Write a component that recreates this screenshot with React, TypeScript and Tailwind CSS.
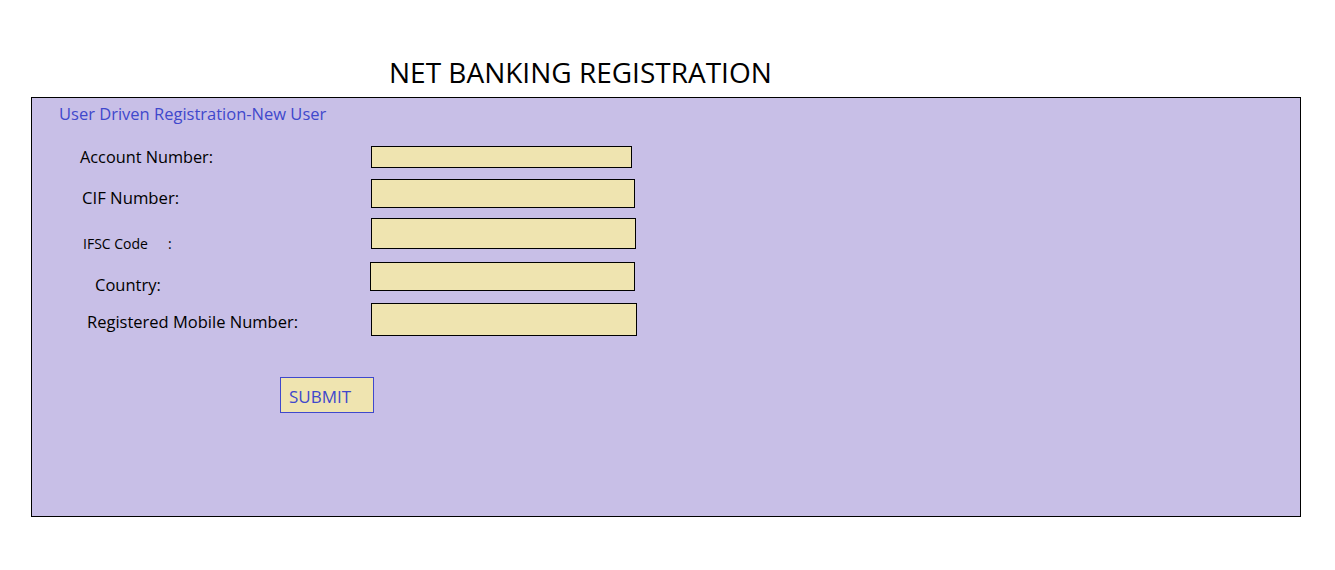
export default function App() {
  const font = { fontFamily: '"Open Sans", "Noto Sans", sans-serif' };
  return (
    <div className="h-[570px] w-[1335px] bg-white" style={font}>
      <div className="h-[97px] pl-[389px] pt-[52px]">
        <h1 className="text-[28px] leading-[40px] font-normal text-black">NET BANKING REGISTRATION</h1>
      </div>
      <div className="ml-[31px] h-[420px] w-[1270px] border border-black bg-[#c8bfe7]">
        <div className="pl-[27px] pt-[6px] text-[16.5px] leading-[20px] text-[#3f48cc]">
          User Driven Registration-New User
        </div>

        <div className="mt-[22px] flex h-[22px] items-start">
          <div className="w-[339px] pl-[48px] pt-[1px] text-[16.3px] leading-[20px] text-black">Account Number:</div>
          <div className="h-[22px] w-[261px] border border-black bg-[#efe4b0]" />
        </div>

        <div className="mt-[11px] flex h-[29px] items-start">
          <div className="w-[339px] pl-[50px] pt-[9px] text-[16.7px] leading-[20px] text-black">CIF Number:</div>
          <div className="h-[29px] w-[264px] border border-black bg-[#efe4b0]" />
        </div>

        <div className="mt-[10px] flex h-[31px] items-start">
          <div className="w-[339px] pl-[51px] pt-[18px] text-[14px] leading-[16px] text-black">
            IFSC Code<span className="ml-[20px]">:</span>
          </div>
          <div className="h-[31px] w-[265px] border border-black bg-[#efe4b0]" />
        </div>

        <div className="mt-[13px] flex h-[29px] items-start">
          <div className="w-[338px] pl-[63px] pt-[13px] text-[16.5px] leading-[20px] text-black">Country:</div>
          <div className="h-[29px] w-[265px] border border-black bg-[#efe4b0]" />
        </div>

        <div className="mt-[12px] flex h-[33px] items-start">
          <div className="w-[339px] pl-[55px] pt-[9px] text-[16.5px] leading-[20px] text-black">Registered Mobile Number:</div>
          <div className="h-[33px] w-[266px] border border-black bg-[#efe4b0]" />
        </div>

        <div className="mt-[41px] pl-[248px]">
          <button
            type="button"
            className="h-[36px] w-[94px] border border-[#3f48cc] bg-[#efe4b0] pl-[8px] pt-[4px] text-left text-[17px] leading-[20px] text-[#3f48cc]"
          >
            SUBMIT
          </button>
        </div>
      </div>
    </div>
  );
}
